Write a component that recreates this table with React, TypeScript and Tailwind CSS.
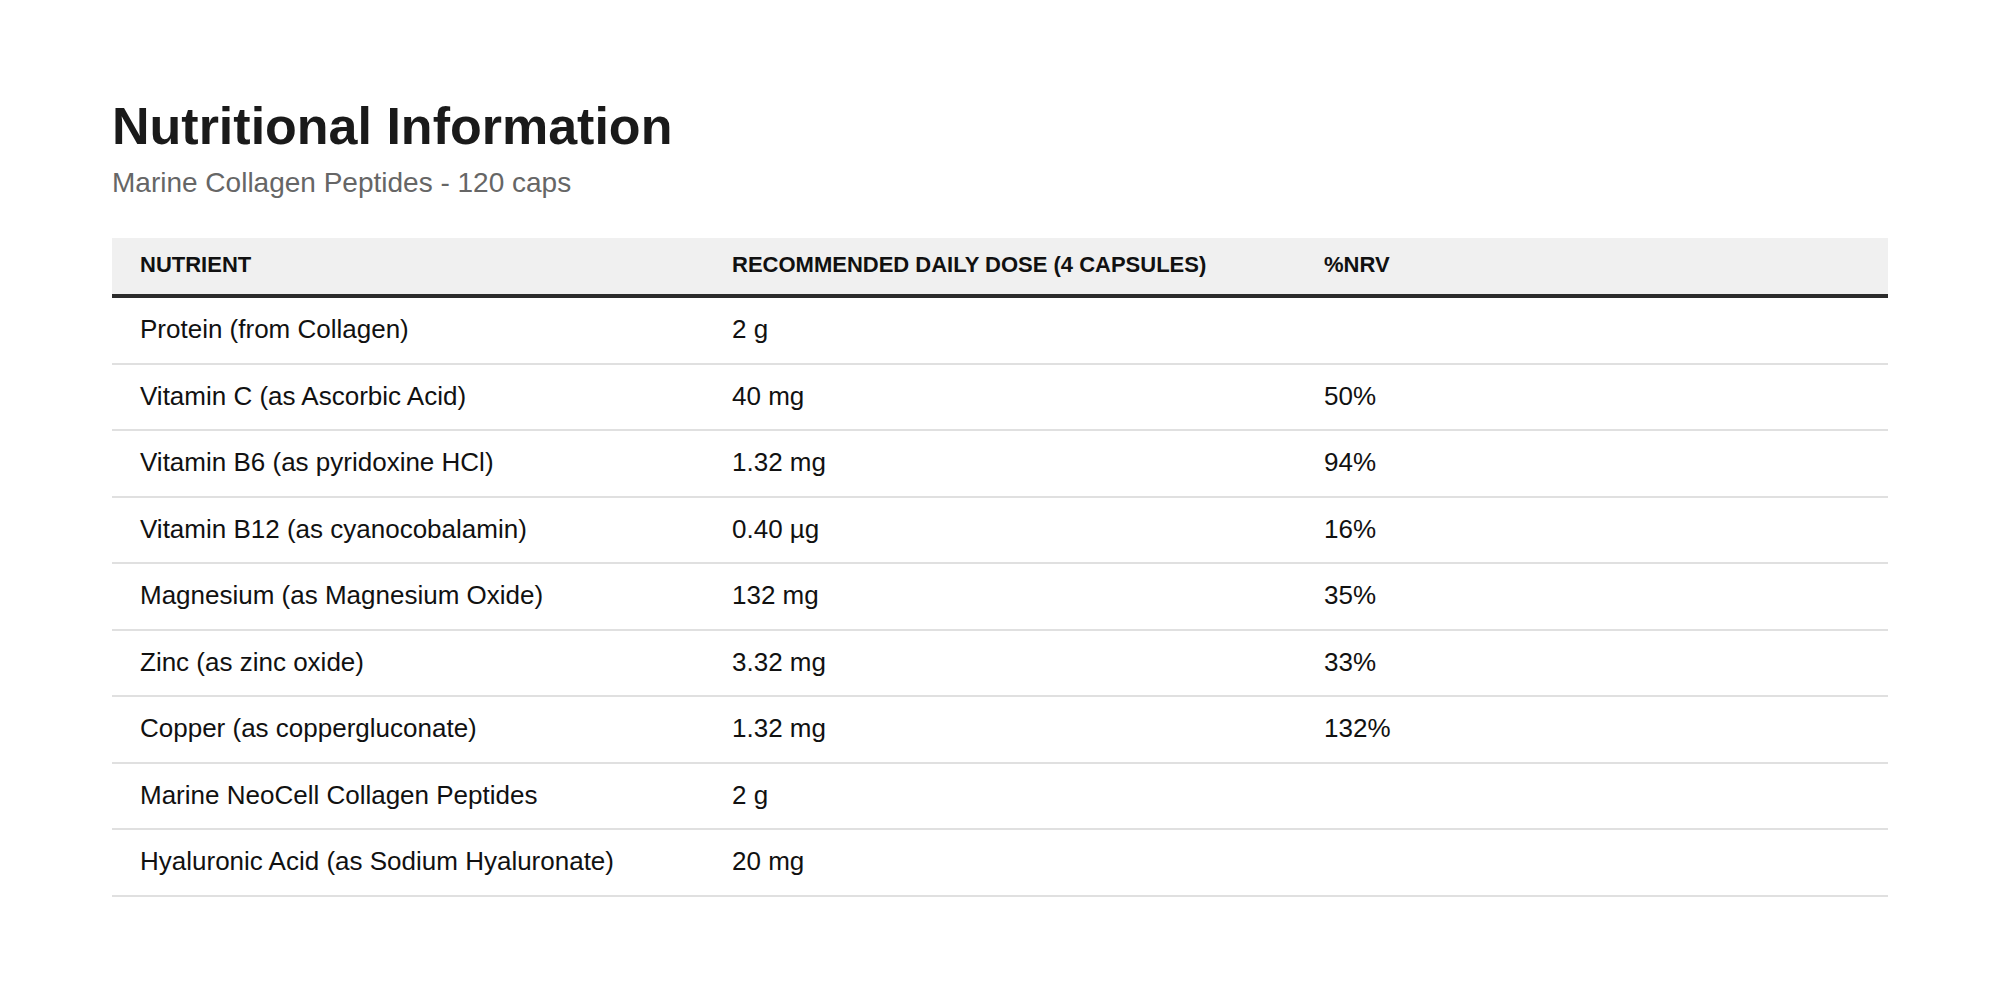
import React from "react";

type Row = {
  nutrient: string;
  dose: string;
  nrv?: string;
};

const rows: Row[] = [
  { nutrient: "Protein (from Collagen)", dose: "2 g" },
  { nutrient: "Vitamin C (as Ascorbic Acid)", dose: "40 mg", nrv: "50%" },
  { nutrient: "Vitamin B6 (as pyridoxine HCl)", dose: "1.32 mg", nrv: "94%" },
  { nutrient: "Vitamin B12 (as cyanocobalamin)", dose: "0.40 µg", nrv: "16%" },
  { nutrient: "Magnesium (as Magnesium Oxide)", dose: "132 mg", nrv: "35%" },
  { nutrient: "Zinc (as zinc oxide)", dose: "3.32 mg", nrv: "33%" },
  { nutrient: "Copper (as coppergluconate)", dose: "1.32 mg", nrv: "132%" },
  { nutrient: "Marine NeoCell Collagen Peptides", dose: "2 g" },
  { nutrient: "Hyaluronic Acid (as Sodium Hyaluronate)", dose: "20 mg" },
];

export default function App() {
  return (
    <div className="min-h-screen bg-white px-[112px] pt-[95px] pb-16 font-['Liberation_Sans',Arial,sans-serif]">
      <h1 className="text-[52px] leading-[62px] font-bold text-[#1a1a1a]">
        Nutritional Information
      </h1>
      <p className="mt-[5px] text-[28px] leading-[42px] text-[#666666]">
        Marine Collagen Peptides - 120 caps
      </p>

      <table className="mt-[34px] w-full table-fixed border-collapse">
        <thead>
          <tr className="bg-[#f0f0f0] border-b-4 border-[#2b2b2b]">
            <th className="w-1/3 px-[28px] pt-[10px] pb-[12px] text-left text-[22px] leading-[34px] font-bold uppercase text-[#111111]">
              Nutrient
            </th>
            <th className="w-1/3 px-[28px] pt-[10px] pb-[12px] text-left text-[22px] leading-[34px] font-bold uppercase text-[#111111]">
              Recommended Daily Dose (4 Capsules)
            </th>
            <th className="w-1/3 px-[28px] pt-[10px] pb-[12px] text-left text-[22px] leading-[34px] font-bold uppercase text-[#111111]">
              %NRV
            </th>
          </tr>
        </thead>
        <tbody>
          {rows.map((row) => (
            <tr key={row.nutrient} className="border-b-2 border-[#e0e0e0]">
              <td className="px-[28px] pt-[12px] pb-[14px] text-[26px] leading-[38.5px] text-[#111111]">
                {row.nutrient}
              </td>
              <td className="px-[28px] pt-[12px] pb-[14px] text-[26px] leading-[38.5px] text-[#111111]">
                {row.dose}
              </td>
              <td className="px-[28px] pt-[12px] pb-[14px] text-[26px] leading-[38.5px] text-[#111111]">
                {row.nrv ?? ""}
              </td>
            </tr>
          ))}
        </tbody>
      </table>
    </div>
  );
}
